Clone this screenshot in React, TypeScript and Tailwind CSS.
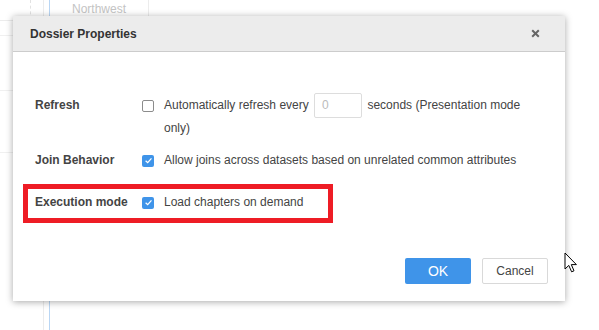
import React from "react";

function Check({ checked }: { checked: boolean }) {
  if (checked) {
    return (
      <span className="inline-flex h-[12px] w-[12px] shrink-0 items-center justify-center rounded-[2px] bg-[#3f94e9]">
        <svg width="9" height="9" viewBox="0 0 10 10">
          <path d="M1.8 5.2 L4.1 7.4 L8.3 2.6" fill="none" stroke="#fff" strokeWidth="1.4" />
        </svg>
      </span>
    );
  }
  return <span className="inline-block h-[12px] w-[12px] shrink-0 rounded-[2px] border border-[#8c8c8c] bg-white" />;
}

export default function App() {
  return (
    <div
      className="relative h-[330px] w-[599px] overflow-hidden bg-white text-[12px] text-[#444]"
      style={{ fontFamily: '"Liberation Sans", Arial, sans-serif' }}
    >
      {/* background table */}
      <div className="absolute left-0 top-0 h-full w-[599px]">
        <div className="absolute left-[30px] top-0 h-[20px] border-l border-dashed border-[#e2e2e2]" />
        <div className="absolute left-[43px] top-0 h-full border-l border-[#ececec]" />
        <div className="absolute left-[49px] top-0 h-full border-l border-[#b9d6f4]" />
        <div className="absolute left-[148px] top-0 h-[20px] border-l border-[#ececec]" />
        <div className="absolute left-0 top-[20px] w-[13px] border-t border-[#ececec]" />
        <div className="absolute left-0 top-[35px] w-[13px] border-t border-[#f0f0f0]" />
        <div className="absolute left-0 top-[90px] w-[13px] border-t border-[#f0f0f0]" />
        <div className="absolute left-0 top-[152px] w-[13px] border-t border-[#f0f0f0]" />
        <div className="absolute left-[72px] top-[1px] leading-[16px] text-[#c4c4c4]">Northwest</div>
      </div>

      {/* dialog */}
      <div className="absolute left-[13px] top-[16px] flex h-[285px] w-[552px] flex-col bg-white shadow-[0_1px_7px_rgba(0,0,0,0.35)]">
        <div className="flex h-[36px] shrink-0 items-center justify-between border-b border-[#cccccc] bg-[#ececec] pl-[17px] pr-[25px]">
          <span className="font-bold text-[#333]">Dossier Properties</span>
          <svg width="9" height="9" viewBox="0 0 9 9">
            <path d="M1.2 1.2 L7.8 7.8 M7.8 1.2 L1.2 7.8" stroke="#666" strokeWidth="2" />
          </svg>
        </div>

        <div className="flex flex-1 flex-col pl-[22px] pr-[20px] pt-[42px]">
          <div className="flex leading-[23px]">
            <div className="w-[107px] shrink-0 font-bold">Refresh</div>
            <div className="flex h-[23px] w-[22px] shrink-0 items-center">
              <Check checked={false} />
            </div>
            <div className="w-[362px]">
              Automatically refresh every{" "}
              <span className="mx-[2px] -my-[2px] inline-block h-[25px] w-[48px] rounded-[2px] border border-[#dddddd] pl-[7px] align-middle leading-[23px] text-[#bbbbbb]">
                0
              </span>{" "}
              seconds (Presentation mode only)
            </div>
          </div>

          <div className="mt-[9px] flex leading-[23px]">
            <div className="w-[107px] shrink-0 font-bold">Join Behavior</div>
            <div className="flex h-[23px] w-[22px] shrink-0 items-center">
              <Check checked={true} />
            </div>
            <div>Allow joins across datasets based on unrelated common attributes</div>
          </div>

          <div className="mt-[19px] flex leading-[23px]">
            <div className="w-[107px] shrink-0 font-bold">Execution mode</div>
            <div className="flex h-[23px] w-[22px] shrink-0 items-center">
              <Check checked={true} />
            </div>
            <div>Load chapters on demand</div>
          </div>

          <div className="mt-auto flex justify-end gap-[11px] pb-[17px]">
            <button className="h-[26px] w-[66px] rounded-[2px] bg-[#3f94e9] text-[14px] text-white">OK</button>
            <button className="mr-[-3px] h-[26px] w-[66px] rounded-[2px] border border-[#d9d9d9] bg-white text-[12px] text-[#444]">
              Cancel
            </button>
          </div>
        </div>
      </div>

      {/* annotation box */}
      <div className="absolute left-[23px] top-[184px] h-[39px] w-[310px] border-[5px] border-[#ee1c25]" />

      {/* cursor */}
      <svg className="absolute left-[564px] top-[252px]" width="16" height="22" viewBox="0 0 16 22">
        <path d="M1 1 L1 17 L4.8 13.4 L7.6 19.8 L10 18.8 L7.3 12.6 L12.4 12.6 Z" fill="#fff" stroke="#000" strokeWidth="1" strokeLinejoin="round" />
      </svg>
    </div>
  );
}
